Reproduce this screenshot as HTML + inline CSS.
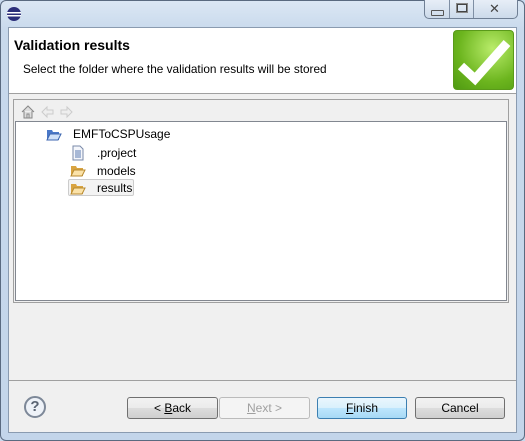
<!DOCTYPE html>
<html><head><style>
body{margin:0;width:525px;height:441px;overflow:hidden;background:#c9daee;font-family:"Liberation Sans",sans-serif;font-size:12px;position:relative}
.frame{position:absolute;left:0;top:0;width:523px;height:439px;border:1px solid #5a6a80;border-radius:6px;background:linear-gradient(#dbe7f4,#c8d9ec 30px,#c3d5ea)}
.client{position:absolute;left:8px;top:27px;width:509px;height:406px;background:#f0f0f0;border:1px solid #8a9bb0;box-sizing:border-box}
.hdr{position:absolute;left:0;top:0;width:507px;height:65px;background:#fff;border-bottom:1px solid #a0a0a0}
.t{position:absolute;white-space:nowrap}
.btn{position:absolute;top:369px;height:22px;border:1px solid #707070;border-radius:3px;background:linear-gradient(#f2f2f2,#ebebeb 50%,#dddddd 50%,#cfcfcf);box-sizing:border-box;text-align:center;line-height:20px;font-size:12px}
</style></head><body>
<div class="frame"></div>
<svg style="position:absolute;left:6px;top:6px" width="16" height="16"><circle cx="8" cy="8" r="7" fill="#2c2f7a"/><rect x="1" y="6" width="14" height="1.5" fill="#fff"/><rect x="1" y="9" width="14" height="1.5" fill="#fff"/></svg>
<div style="position:absolute;left:424px;top:0;width:92px;height:18px;border:1px solid #6f7f94;border-top:none;border-radius:0 0 5px 5px;background:linear-gradient(#e7eef7,#ccdaea)"></div>
<div style="position:absolute;left:449px;top:0;width:1px;height:18px;background:#7f8fa4"></div>
<div style="position:absolute;left:473px;top:0;width:1px;height:18px;background:#7f8fa4"></div>
<div style="position:absolute;left:431px;top:10px;width:11px;height:4px;border:1px solid #555;border-radius:1px"></div>
<div style="position:absolute;left:457px;top:4px;width:8px;height:6px;border:1px solid #444;outline:1px solid #888"></div>
<div class="t" style="left:489px;top:1px;font-size:13px;color:#444">✕</div>
<div class="client">
 <div class="hdr">
  <div class="t" style="left:5px;top:9px;font-size:14px;font-weight:bold">Validation results</div>
  <div class="t" style="left:14px;top:34px;font-size:11.8px">Select the folder where the validation results will be stored</div>
  <div style="position:absolute;left:444px;top:2px;width:61px;height:60px;border-radius:4px;background:radial-gradient(circle at 65% 30%,#b9ec6a,#6cb51e 60%,#4f9a12);border:1px solid #5a9a1a;box-sizing:border-box"></div>
  <svg style="position:absolute;left:446px;top:6px" width="58" height="52"><path d="M6 32 L20 45 L52 9" stroke="#fff" stroke-width="9" fill="none" stroke-linejoin="miter"/></svg>
 </div>
 <div style="position:absolute;left:4px;top:71px;width:496px;height:204px;border:1px solid #a0a0a0;box-sizing:border-box"></div>
 <svg style="position:absolute;left:11px;top:76px" width="60" height="16"><path d="M2 8 L8 2 L14 8 M4 7 V14 H12 V7 M7 14 V10 H9 V14" stroke="#888" fill="#ddd"/><path d="M22 8 L27 3 V6 H33 V10 H27 V13 Z" stroke="#ccc" fill="#eee"/><path d="M52 8 L47 3 V6 H41 V10 H47 V13 Z" stroke="#ccc" fill="#eee"/></svg>
 <div style="position:absolute;left:6px;top:93px;width:492px;height:180px;background:#fff;border:1px solid #828790;box-sizing:border-box"></div>
 <svg style="position:absolute;left:37px;top:100px" width="16" height="13"><path d="M1 2 H6 L7 4 H13 V12 H1 Z" fill="#4a78c8"/><path d="M1 12 L4 6 H15 L12 12 Z" fill="#cfe0f8" stroke="#3d66b0"/></svg>
 <div class="t" style="left:64px;top:99px">EMFToCSPUsage</div>
 <svg style="position:absolute;left:63px;top:117px" width="12" height="16"><path d="M1 1 H8 L11 4 V15 H1 Z" fill="#f4f6fb" stroke="#7a8aa8"/><path d="M3 6 H9 M3 8 H9 M3 10 H9 M3 12 H9" stroke="#5a7ab0"/></svg>
 <div class="t" style="left:88px;top:118px">.project</div>
 <svg style="position:absolute;left:61px;top:136px" width="16" height="13"><path d="M1 2 H6 L7 4 H13 V12 H1 Z" fill="#d9a441"/><path d="M1 12 L4 6 H15 L12 12 Z" fill="#fbe2a8" stroke="#b88a30"/></svg>
 <div class="t" style="left:88px;top:136px">models</div>
 <div style="position:absolute;left:59px;top:151px;width:66px;height:17px;border:1px solid #ccc;border-radius:2px;background:#f3f3f3;box-sizing:border-box"></div>
 <svg style="position:absolute;left:61px;top:154px" width="16" height="13"><path d="M1 2 H6 L7 4 H13 V12 H1 Z" fill="#d9a441"/><path d="M1 12 L4 6 H15 L12 12 Z" fill="#fbe2a8" stroke="#b88a30"/></svg>
 <div class="t" style="left:88px;top:153px">results</div>
 <div style="position:absolute;left:0;top:352px;width:507px;height:1px;background:#a0a0a0"></div>
 <div style="position:absolute;left:15px;top:368px;width:22px;height:22px;border:2px solid #7d8898;border-radius:50%;box-sizing:border-box;text-align:center;font-weight:bold;line-height:18px;color:#5a6473;font-size:15px;background:#eef2f8">?</div>
 <div class="btn" style="left:118px;width:91px">&lt; <u>B</u>ack</div>
 <div class="btn" style="left:210px;width:91px;border-color:#bbb;background:#f4f4f4;color:#a0a0a0"><u>N</u>ext &gt;</div>
 <div class="btn" style="left:308px;width:90px;border-color:#3c7fb1;background:linear-gradient(#eaf6fd,#d9f0fc 50%,#bee6fd 50%,#a7d9f5)"><u>F</u>inish</div>
 <div class="btn" style="left:406px;width:90px">Cancel</div>
</div>
</body></html>
